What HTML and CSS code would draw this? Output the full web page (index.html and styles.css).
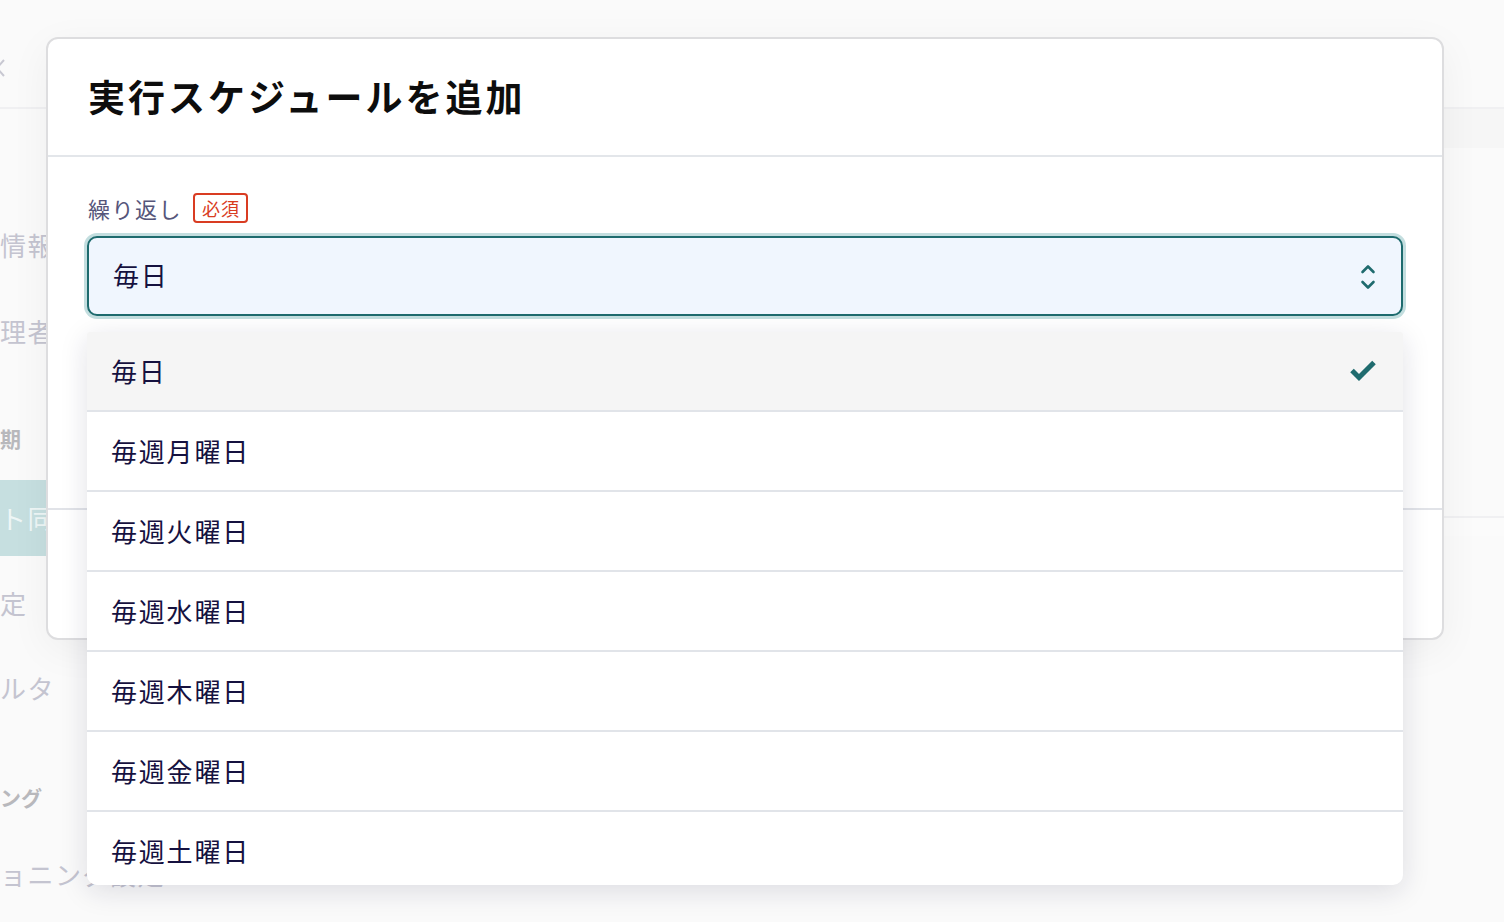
FILE: index.html
```html
<!DOCTYPE html>
<html lang="ja">
<head>
<meta charset="utf-8">
<title>実行スケジュールを追加</title>
<link rel="stylesheet" href="styles.css">
</head>
<body>
<div class="page">
  <div class="topbar">
    <svg class="back" width="20" height="24" viewBox="0 0 20 24"><path d="M8 4 L1 12 L8 20" fill="none" stroke="#c8c8d2" stroke-width="2"/></svg>
  </div>
  <div class="layout">
    <nav class="sidebar">
      <div class="nav-item s1">情報</div>
      <div class="nav-item s2">理者</div>
      <div class="nav-head s3">期</div>
      <div class="nav-item active">ト同</div>
      <div class="nav-item s5">定</div>
      <div class="nav-item s6">ルタ</div>
      <div class="nav-head s7">ング</div>
      <div class="nav-item s8">ョニング設定</div>
    </nav>
    <main class="main">
      <div class="tabband"></div>
      <div class="main-body"></div>
      <div class="main-line"></div>
    </main>
  </div>
</div>

<div class="modal">
  <header class="modal-header">
    <h1 class="modal-title">実行スケジュールを追加</h1>
  </header>
  <section class="modal-body">
    <div class="field-label">
      <span class="label-text">繰り返し</span>
      <span class="badge">必須</span>
    </div>
    <div class="select-wrap">
      <div class="select">
        <span class="select-value">毎日</span>
        <svg class="updown" width="16" height="28" viewBox="0 0 16 28"><path d="M2.5 9 L8 3.5 L13.5 9 M2.5 19 L8 24.5 L13.5 19" fill="none" stroke="#1f6b6e" stroke-width="2.6" stroke-linecap="round" stroke-linejoin="round"/></svg>
      </div>
      <ul class="options">
        <li class="option selected"><span>毎日</span>
          <svg class="check" width="28" height="24" viewBox="0 0 28 24"><path d="M3 12.5 L10 19.5 L25 4.5" fill="none" stroke="#1f6b6e" stroke-width="5" stroke-linejoin="miter"/></svg>
        </li>
        <li class="option"><span>毎週月曜日</span></li>
        <li class="option"><span>毎週火曜日</span></li>
        <li class="option"><span>毎週水曜日</span></li>
        <li class="option"><span>毎週木曜日</span></li>
        <li class="option"><span>毎週金曜日</span></li>
        <li class="option"><span>毎週土曜日</span></li>
      </ul>
    </div>
  </section>
  <footer class="modal-footer"></footer>
</div>
</body>
</html>
```

FILE: styles.css
```css
* { box-sizing: border-box; }
html, body {
  margin: 0;
  padding: 0;
  width: 1504px;
  height: 922px;
  overflow: hidden;
  background: #fafafa;
  font-family: "Noto Sans CJK JP", "Noto Sans", sans-serif;
}
.page {
  width: 1504px;
  height: 922px;
  display: flex;
  flex-direction: column;
}
.topbar {
  height: 109px;
  border-bottom: 2px solid #f0f0f2;
  position: relative;
}
.back {
  position: absolute;
  left: -4px;
  top: 56px;
}
.layout {
  flex: 1;
  display: flex;
}
.sidebar {
  width: 210px;
  display: flex;
  flex-direction: column;
}
.nav-item, .nav-head {
  white-space: nowrap;
  overflow: hidden;
}
.nav-item {
  font-size: 26px;
  color: #c4c4d0;
  line-height: 40px;
  letter-spacing: 1.5px;
}
.nav-head {
  font-size: 21px;
  font-weight: 700;
  color: #b8b8bc;
  line-height: 30px;
}
.s1 { margin-top: 116px; }
.s2 { margin-top: 46px; }
.s3 { margin-top: 72px; }
.active {
  margin-top: 27px;
  height: 76px;
  line-height: 76px;
  background: #c6dfe0;
  color: #eef6f6;
}
.s5 { margin-top: 27px; }
.s6 { margin-top: 45px; }
.s7 { margin-top: 74px; }
.s8 { margin-top: 42px; }
.main {
  flex: 1;
  display: flex;
  flex-direction: column;
}
.tabband {
  height: 39px;
  background: #f6f6f6;
}
.main-body {
  height: 368px;
}
.main-line {
  height: 20px;
  border-top: 2px solid #f0f0f2;
  background: #fbfbfb;
}

.modal {
  position: absolute;
  left: 46px;
  top: 37px;
  width: 1398px;
  height: 603px;
  background: #fff;
  border: 2px solid #dddddf;
  border-radius: 12px;
  box-shadow: 0 10px 40px rgba(0, 0, 0, 0.05);
  display: flex;
  flex-direction: column;
}
.modal-header {
  height: 118px;
  border-bottom: 2px solid #e3e6ea;
  display: flex;
  align-items: center;
  padding-left: 40px;
  padding-bottom: 2px;
}
.modal-title {
  margin: 0;
  font-size: 37px;
  font-weight: 700;
  color: #0d0d0d;
  letter-spacing: 3px;
}
.modal-body {
  height: 353px;
  border-bottom: 2px solid #e1e3e8;
  padding: 36px 39px 0;
}
.field-label {
  display: flex;
  align-items: center;
  gap: 11px;
  height: 30px;
  font-size: 22px;
  color: #55557a;
  margin-left: 1px;
}
.label-text { letter-spacing: 1.5px; }
.badge {
  border: 2px solid #d93c22;
  color: #d93c22;
  border-radius: 4px;
  font-size: 18px;
  line-height: 26px;
  padding: 0 6px 0 7px;
  letter-spacing: 1px;
}
.select-wrap {
  position: relative;
  margin-top: 13px;
}
.select {
  height: 80px;
  background: #f0f6fe;
  border: 2px solid #1e6b6e;
  border-radius: 10px;
  box-shadow: 0 0 0 3px #c3dedf;
  display: flex;
  align-items: center;
  justify-content: space-between;
  padding: 0 25px 4px 24px;
}
.select-value {
  font-size: 26px;
  color: #15113f;
  letter-spacing: 1.8px;
}
.updown { margin-top: 6px; }
.options {
  position: absolute;
  left: 0;
  right: 0;
  top: 96px;
  height: 553px;
  margin: 0;
  padding: 0;
  list-style: none;
  overflow: hidden;
  background: #fff;
  border-radius: 3px 3px 10px 10px;
  box-shadow: 0 6px 28px rgba(20, 20, 60, 0.13);
  z-index: 2;
}
.option {
  height: 80px;
  flex-shrink: 0;
  border-bottom: 2px solid #e1e4e9;
  display: flex;
  align-items: center;
  justify-content: space-between;
  padding: 0 26px 2px 24px;
  font-size: 26px;
  color: #15113f;
  letter-spacing: 1.8px;
}
.option.selected { background: #f5f5f5; }
.modal-footer { flex: 1; }
```
